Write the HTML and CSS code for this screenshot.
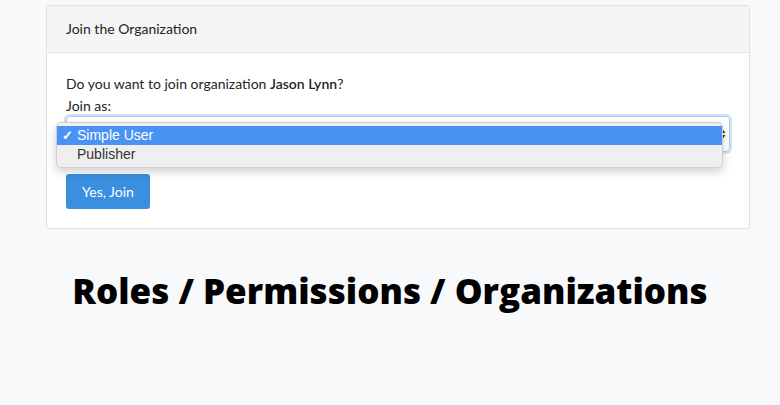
FILE: index.html
```html
<!DOCTYPE html>
<html lang="en">
<head>
    <meta charset="UTF-8">
    <title>Join the Organization</title>
    <link rel="stylesheet" href="styles.css">
</head>
<body>
    <div class="card">
        <div class="card-header">Join the Organization</div>
        <div class="card-body">
            <p class="question">Do you want to join organization <strong>Jason Lynn</strong>?</p>
            <label class="join-label">Join as:</label>
            <div class="select-wrap">
                <div class="select-box">
                    <span class="arrows">
                        <svg width="7" height="12" viewBox="0 0 7 12"><path d="M3.5 1 L6.5 5 H0.5 Z M3.5 11 L0.5 7 H6.5 Z" fill="#333"/></svg>
                    </span>
                </div>
                <ul class="dropdown">
                    <li class="selected"><span class="check">✓</span>Simple User</li>
                    <li><span class="check"></span>Publisher</li>
                </ul>
            </div>
            <button class="btn">Yes, Join</button>
        </div>
    </div>

    <h1 class="title">Roles / Permissions / Organizations</h1>
</body>
</html>
```

FILE: styles.css
```css
:root {
    --page-bg: #f8f9fb;
    --border-color: #dfe1e4;
    --header-bg: #f5f5f5;
    --text-color: #212529;
    --primary: #3a8fde;
}

body {
    margin: 0;
    padding: 5px 30px 0 46px;
    background: var(--page-bg);
    font-family: Lato, "Noto Sans", sans-serif;
    color: var(--text-color);
    font-size: 14px;
}

.card {
    width: 702px;
    background: #fff;
    border: 1px solid var(--border-color);
    border-radius: 3px;
}

.card-header {
    height: 46px;
    line-height: 46px;
    padding: 0 19px;
    background: var(--header-bg);
    border-bottom: 1px solid var(--border-color);
    border-radius: 3px 3px 0 0;
}

.card-body {
    padding: 20px 19px 19px;
}

.question {
    margin: 0;
    line-height: 22px;
}

.question strong {
    font-weight: 600;
}

.join-label {
    display: block;
    line-height: 21px;
}

.select-wrap {
    position: relative;
}

.select-box {
    height: 34px;
    border: 1px solid #a9cdf0;
    border-radius: 4px;
    box-shadow: 0 0 0 2px #cfe3f7;
    display: flex;
    align-items: center;
    justify-content: flex-end;
    padding-right: 3px;
}

.arrows {
    display: flex;
}

.dropdown {
    position: absolute;
    left: -10px;
    top: 6px;
    width: 665px;
    margin: 0;
    padding: 3px 0;
    list-style: none;
    background: #efefef;
    border: 1px solid #cfcfcf;
    border-radius: 5px;
    box-shadow: 0 4px 10px rgba(0, 0, 0, 0.18);
    font-family: "Liberation Sans", Arial, sans-serif;
    font-size: 14px;
    color: #333;
}

.dropdown li {
    height: 19px;
    line-height: 19px;
    display: flex;
}

.dropdown li.selected {
    background: #4a93f5;
    color: #fff;
}

.check {
    width: 20px;
    text-align: center;
    font-size: 13px;
    font-weight: bold;
}

.btn {
    display: block;
    margin-top: 22px;
    width: 84px;
    height: 35px;
    border: 0;
    border-radius: 3px;
    background: var(--primary);
    color: #fff;
    font-family: inherit;
    font-size: 14px;
}

.title {
    margin: 38px 0 0 -46px;
    width: 780px;
    text-align: center;
    font-family: "Open Sans", sans-serif;
    font-weight: 800;
    font-size: 35px;
    color: #000;
}
```
